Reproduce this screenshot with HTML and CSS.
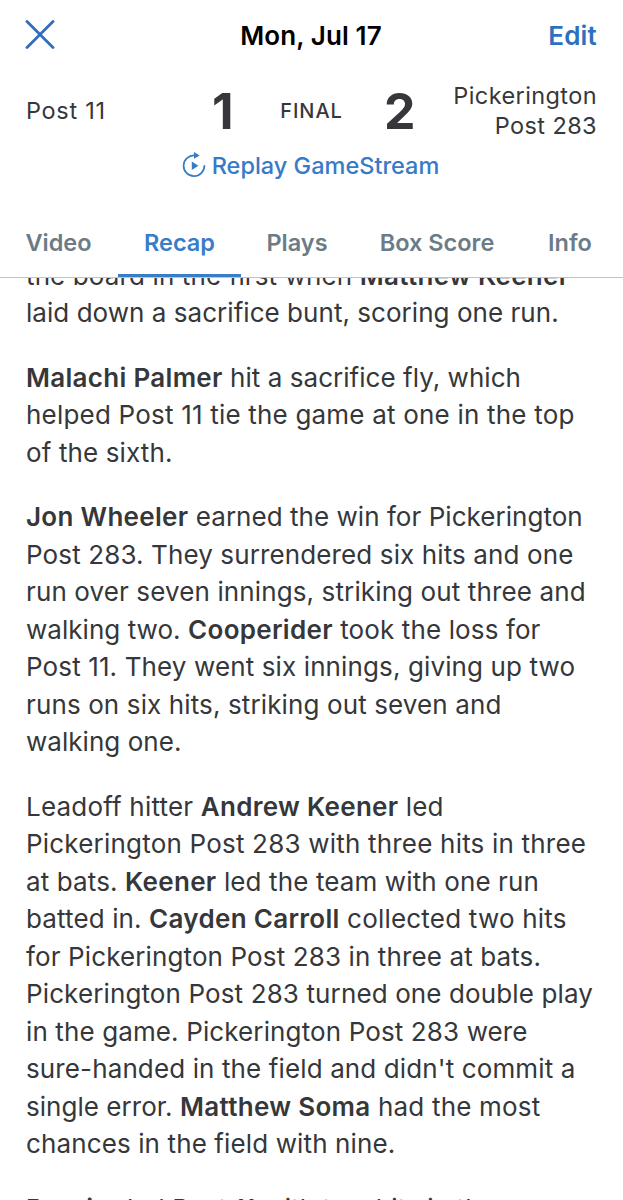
FILE: index.html
```html
<!DOCTYPE html>
<html lang="en">
<head>
<meta charset="utf-8">
<title>Game Recap</title>
<link rel="stylesheet" href="styles.css">
</head>
<body>
<div class="app">
  <header class="topbar">
    <svg class="close" viewBox="0 0 30 30" width="30" height="30"><path d="M2 1.6 28 27.6M28 1.6 2 27.6"/></svg>
    <h1 class="title">Mon, Jul 17</h1>
    <span class="edit">Edit</span>
  </header>
  <section class="score">
    <span class="team team-away">Post 11</span>
    <span class="num num-away">1</span>
    <span class="status">FINAL</span>
    <span class="num num-home">2</span>
    <span class="team team-home">Pickerington<br>Post 283</span>
  </section>
  <div class="replay">
    <svg class="replay-icon" viewBox="0 0 24 26" width="24" height="26"><path class="ring" d="M14 3.4H12.5A10.4 10.4 0 1 0 22.4 13.8"/><path class="solid" d="M12 0 17.6 3.4 12 6.8ZM9.8 9.6 16.4 13.8 9.8 18Z"/></svg>
    <span class="replay-text">Replay GameStream</span>
  </div>
  <nav class="tabs">
    <span class="tab video">Video</span>
    <span class="tab recap">Recap</span>
    <span class="tab plays">Plays</span>
    <span class="tab box">Box Score</span>
    <span class="tab info">Info</span>
  </nav>
  <main class="content">
    <p>the board in the first when <b>Matthew Keener</b><br><span class="tight">laid down a sacrifice bunt, scoring one run.</span></p>
    <p><b>Malachi Palmer</b> <span class="tight">hit a sacrifice fly, which</span><br><span class="wide">helped Post 11 tie the game at one in the top</span><br>of the sixth.</p>
    <p><b>Jon Wheeler</b> <span class="tight">earned the win for Pickerington</span><br>Post 283. They surrendered six hits and one<br>run over seven innings, striking out three and<br><span class="tight">walking two.</span> <b>Cooperider</b> took the loss for<br>Post 11. They went six innings, giving up two<br>runs on six hits, striking out seven and<br><span class="tight">walking one.</span></p>
    <p><span class="wide">Leadoff hitter</span> <b>Andrew Keener</b> led<br><span class="wide">Pickerington Post 283 with three hits in three</span><br>at bats. <b>Keener</b> led the team with one run<br>batted in. <b>Cayden Carroll</b> <span class="wide">collected two hits</span><br>for Pickerington Post 283 in three at bats.<br>Pickerington Post 283 turned one double play<br>in the game. Pickerington Post 283 were<br>sure-handed in the field and didn't commit a<br><span class="tight">single error.</span> <b>Matthew Soma</b> <span class="wide">had the most</span><br>chances in the field with nine.</p>
    <p><b>Bernier</b> led Post 11 with two hits in three</p>
  </main>
</div>
</body>
</html>
```
FILE: styles.css
```css
* { box-sizing: border-box; }
body { margin: 0; background: #fff; font-family: Inter, "Liberation Sans", sans-serif; color: #35373a; }
.app { display: flex; flex-direction: column; height: 1200px; overflow: hidden; background: #fff; }
.topbar { display: grid; grid-template-columns: 1fr auto 1fr; align-items: center; height: 70px; padding: 0 26px 0 25px; flex: none; }
.close { fill: none; stroke: #2f6dbd; stroke-width: 2.8; stroke-linecap: round; }
.title { margin: 0; font-size: 26px; font-weight: 600; color: #000; letter-spacing: 0.1px; }
.edit { justify-self: end; font-size: 26px; font-weight: 600; color: #2f6fc0; letter-spacing: 0.2px; }
.score { display: grid; grid-template-columns: 186px 27px 145px 45px 1fr; align-items: center; height: 80px; padding: 2px 26px 0; flex: none; }
.team { font-size: 23.5px; line-height: 30px; letter-spacing: 0.4px; font-weight: 430; }
.team-away { letter-spacing: 0.7px; }
.team-home { text-align: right; }
.num { font-size: 50px; line-height: 60px; font-weight: 700; }
.status { font-size: 20px; text-align: center; font-weight: 500; letter-spacing: 0.9px; }
.replay { display: flex; justify-content: center; align-items: center; gap: 6px; height: 30px; padding-right: 2px; color: #377ac8; flex: none; }
.replay-icon { flex: none; }
.ring { fill: none; stroke: #377ac8; stroke-width: 1.7; stroke-linecap: round; }
.solid { fill: #377ac8; }
.replay-text { font-size: 23.5px; font-weight: 450; }
.tabs { display: grid; grid-template-columns: 117px 124px 112px 168px 98px; height: 98px; padding-top: 30px; border-bottom: 1px solid #bfc4ca; flex: none; }
.tab { display: flex; align-items: center; justify-content: center; height: 67px; padding-bottom: 3px; font-size: 23.5px; font-weight: 600; color: #6b7b87; }
.recap { margin-left: 1px; padding-bottom: 0; color: #397dc8; border-bottom: 3px solid #397dc8; }
.content { flex: 1; overflow: hidden; padding: 0 0 0 26px; font-size: 26px; line-height: 37.5px; letter-spacing: 0.12px; white-space: nowrap; }
.content p { margin: 0 0 27px; }
.content p:first-child { margin-top: -21.5px; }
.content b { font-weight: 600; letter-spacing: 0.3px; }
.wide { letter-spacing: 0.2px; }
.tight { letter-spacing: 0.04px; }
```
